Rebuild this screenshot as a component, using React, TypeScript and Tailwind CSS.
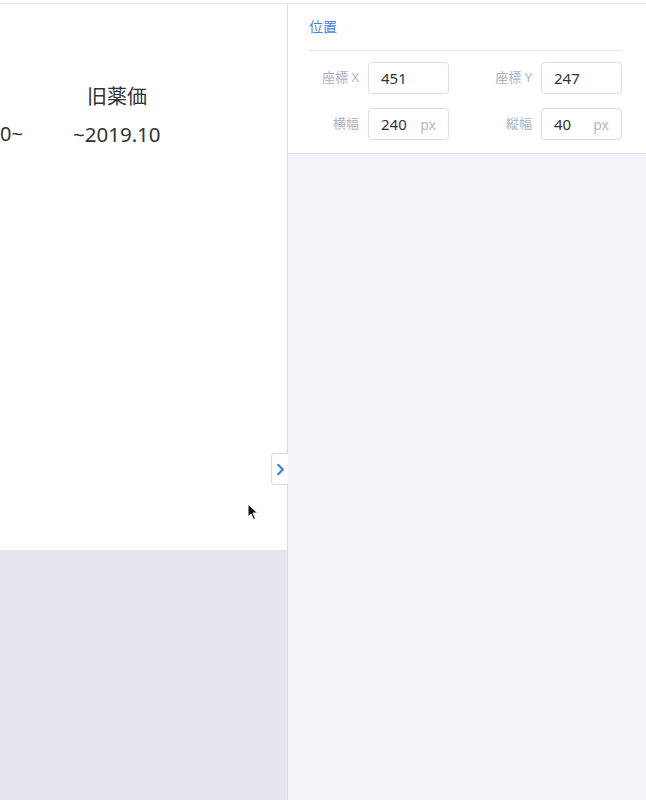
import { ChevronRight } from "lucide-react";

const font = { fontFamily: "'Noto Sans', 'Noto Sans CJK JP', sans-serif" };

function Field({ label, value, unit }: { label: string; value: string; unit?: string }) {
  return (
    <div className="flex items-center">
      <span className="w-[58px] pr-[9px] text-right text-[13px] text-[#aeb1c2]">{label}</span>
      <div className="flex h-[32px] w-[81px] items-center justify-between rounded-[4px] border border-[#dcdde5] bg-white px-[12px]">
        <span className="text-[15px] text-[#333]">{value}</span>
        {unit && <span className="text-[14px] text-[#b5b8c8]">{unit}</span>}
      </div>
    </div>
  );
}

export default function App() {
  return (
    <div className="flex h-[800px] w-[646px] flex-col overflow-hidden bg-white" style={font}>
      <div className="h-[4px] border-b border-[#e3e4ea]" />
      <div className="flex flex-1">
        {/* canvas */}
        <div className="relative flex w-[287px] flex-col">
          <div className="relative h-[546px] bg-white text-[#333]">
            <div className="absolute left-[87px] top-[78px] text-[20px]">旧薬価</div>
            <div className="absolute left-0 top-[115px] text-[20px]">0~</div>
            <div className="absolute left-[73px] top-[115px] text-[20.5px]">~2019.10</div>
            <svg className="absolute left-[247px] top-[499px]" width="12" height="18" viewBox="0 0 12 18">
              <path d="M1 1 L1 14 L4 11 L6.5 16.5 L8.5 15.5 L6 10 L10.5 10 Z" fill="#111" stroke="#fff" strokeWidth="1" />
            </svg>
          </div>
          <div className="flex-1 bg-[#e5e5ed]" />
          <button className="absolute right-[-1px] top-[449px] flex h-[32px] w-[17px] items-center justify-center rounded-l-[4px] border border-r-0 border-[#d9dbe3] bg-white">
            <ChevronRight className="h-[19px] w-[19px] shrink-0 text-[#2f80ed]" strokeWidth={2.6} />
          </button>
        </div>
        {/* side panel */}
        <div className="flex flex-1 flex-col border-l border-[#dadbe2] bg-[#f3f4f9]">
          <div className="border-b border-[#e0e1e8] bg-white pb-[13px] pl-[21px] pr-[24px]">
            <div className="border-b border-[#e1e2ea] pb-[13px] pt-[12px] text-[14px] text-[#4b7fe0]">位置</div>
            <div className="mt-[11px] flex flex-col gap-[14px] pl-[1px]">
              <div className="flex justify-between">
                <Field label="座標 X" value="451" />
                <Field label="座標 Y" value="247" />
              </div>
              <div className="flex justify-between">
                <Field label="横幅" value="240" unit="px" />
                <Field label="縦幅" value="40" unit="px" />
              </div>
            </div>
          </div>
        </div>
      </div>
    </div>
  );
}
